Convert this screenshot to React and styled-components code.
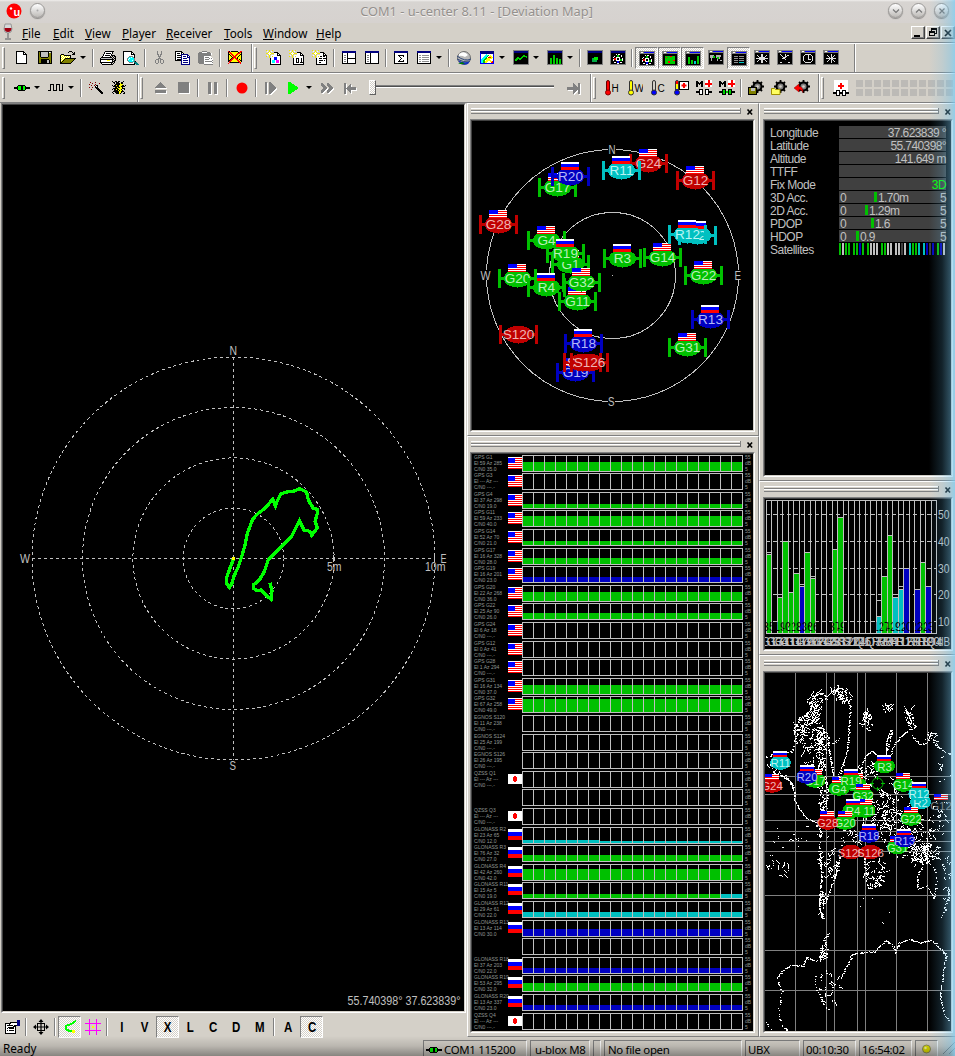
import React from "react";
import styled, { createGlobalStyle, css } from "styled-components";

const FACE = "#d4d0c8";
const GREEN = "#00c000";
const BLUE = "#0000c0";
const CYAN = "#00c0c0";
const RED = "#c00000";
const SILVER = "#c0c0c0";
const UI = '"Noto Sans", "Open Sans", sans-serif';
const ARIAL = '"Liberation Sans", Arial, sans-serif';

const Global = createGlobalStyle`
  *, *::before, *::after { box-sizing: border-box; }
  body { margin: 0; background: ${FACE}; overflow: hidden; }
  svg { display: block; flex: none; }
`;

const Window = styled.div`
  position: relative;
  width: 955px;
  height: 1056px;
  overflow: hidden;
  display: flex;
  flex-direction: column;
  background: ${FACE};
  font-family: ${UI};
  font-size: 11.7px;
  color: #000;
`;

const EdgeGlow = styled.div`
  position: absolute;
  top: 0;
  right: 0;
  width: 26px;
  height: 1056px;
  pointer-events: none;
  background: linear-gradient(to right, rgba(105, 190, 235, 0), rgba(105, 190, 235, 0.18) 50%, rgba(115, 195, 235, 0.42) 82%, rgba(130, 205, 240, 0.8));
`;

const BottomShade = styled.div`
  position: absolute;
  left: 0;
  bottom: 0;
  width: 955px;
  height: 20px;
  pointer-events: none;
  background: linear-gradient(rgba(0, 0, 0, 0), rgba(0, 0, 0, 0.12) 50%, rgba(0, 0, 0, 0.36));
`;

/* ---------- title and menu ---------- */

const TitleBar = styled.div`
  height: 23px;
  flex: none;
  display: flex;
  align-items: center;
  padding: 0 6px 2px 6px;
  gap: 8px;
  background: linear-gradient(#f0eeec 0, #d7d4d1 2px, #d6d2cf);
`;

const TitleText = styled.div`
  flex: 1;
  padding: 1px 0 0 20px;
  text-align: center;
  font-size: 12.8px;
  line-height: 20px;
  color: #94908d;
  text-shadow: 0 1px 0 #f2f0ee;
  white-space: nowrap;
`;

const Round = styled.div`
  width: 15px;
  height: 15px;
  border-radius: 50%;
  border: 1px solid #9a9896;
  background: linear-gradient(#ffffff, #bdbab7);
  box-shadow: 0 1px 1px rgba(0, 0, 0, 0.35);
  display: flex;
  align-items: center;
  justify-content: center;
`;

const TitleButtons = styled.div`
  display: flex;
  gap: 8px;
`;

const MenuBar = styled.div`
  height: 20px;
  flex: none;
  display: flex;
  align-items: center;
  padding-left: 1px;
  border-bottom: 1px solid #808080;
`;

const MenuItem = styled.div`
  width: ${(p) => p.$w}px;
  height: 18px;
  line-height: 19px;
  &::first-letter { text-decoration: underline; }
`;

const MenuIcon = styled.div`
  width: 21px;
  height: 19px;
`;

const MdiButtons = styled.div`
  margin-left: auto;
  display: flex;
  gap: 1px;
`;

const MdiButton = styled.div`
  width: 14px;
  height: 13px;
  border: 1px solid;
  border-color: #fff #404040 #404040 #fff;
  box-shadow: inset -1px -1px 0 #808080;
  display: flex;
  align-items: center;
  justify-content: center;
`;

/* ---------- toolbars ---------- */

const BarRow = styled.div`
  height: 30px;
  flex: none;
  display: flex;
  border-top: 1px solid #fff;
  border-bottom: 1px solid #808080;
`;

const Band = styled.div`
  flex: none;
  width: ${(p) => p.$w}px;
  display: flex;
  align-items: center;
  padding: 0 0 1px 2px;
  overflow: hidden;
  border-right: ${(p) => (p.$last ? "none" : "1px solid #808080")};
  box-shadow: ${(p) => (p.$first ? "none" : "inset 1px 0 0 #fff")};
`;

const Grip = styled.div`
  flex: none;
  width: 3px;
  height: 22px;
  margin-right: ${(p) => p.$gap ?? 5}px;
  border: 1px solid;
  border-color: #fff #808080 #808080 #fff;
`;

const Button = styled.div`
  flex: none;
  width: 23px;
  height: 22px;
  display: flex;
  align-items: center;
  justify-content: center;
  ${(p) =>
    p.$on &&
    css`
      border: 1px solid;
      border-color: #808080 #fff #fff #808080;
      background: repeating-conic-gradient(#fff 0 25%, ${FACE} 0 50%) 0 0 / 2px 2px;
      padding: 1px 0 0 1px;
    `}
`;

const Arrow = styled.div`
  flex: none;
  width: 11px;
  display: flex;
  justify-content: center;
  padding-right: 3px;
  &::after {
    content: "";
    border: 3px solid transparent;
    border-top-color: #000;
    border-bottom: 0;
  }
`;

const Sep = styled.div`
  flex: none;
  width: 6px;
  height: 18px;
  &::after {
    content: "";
    display: block;
    width: 2px;
    height: 100%;
    margin-left: 2px;
    border-left: 1px solid #808080;
    border-right: 1px solid #fff;
  }
`;

const Slider = styled.div`
  flex: none;
  width: 200px;
  height: 22px;
  display: flex;
  align-items: center;
  padding: 0 8px 0 7px;
`;

const Thumb = styled.div`
  width: 7px;
  height: 15px;
  background: repeating-conic-gradient(#fff 0 25%, ${FACE} 0 50%) 0 0 / 2px 2px;
  border: 1px solid;
  border-color: #fff #606060 #606060 #fff;
`;

const Track = styled.div`
  flex: 1;
  height: 3px;
  margin-bottom: 2px;
  border-top: 1px solid #808080;
  border-bottom: 1px solid #fff;
  background: #505050;
`;

const LedGrid = styled.div`
  display: grid;
  grid-template-columns: repeat(12, 7px);
  grid-auto-rows: 7px;
  gap: 2px;
  padding-left: 4px;
`;

const Led = styled.i`
  background: #bcbab6;
`;

const Letter = styled.span`
  font: bold 14px ${ARIAL};
  transform: scaleX(0.82);
`;

/* ---------- work area ---------- */

const Body = styled.div`
  flex: none;
  height: 935px;
  display: grid;
  grid-template-columns: 467px 292px 196px;
`;

const Column = styled.div`
  display: flex;
  flex-direction: column;
`;

const Well = styled.div`
  flex: 1;
  min-height: 0;
  border: 1px solid;
  border-color: #808080 #fff #fff #808080;
  overflow: hidden;
`;

const WellInner = styled.div`
  height: 100%;
  border: 1px solid;
  border-color: #404040 ${FACE} ${FACE} #404040;
  background: #000;
  overflow: hidden;
`;

const MapWell = styled.div`
  flex: none;
  height: 910px;
  display: flex;
  padding: 0 1px 0 1px;
`;

const ViewBar = styled.div`
  flex: 1;
  display: flex;
  align-items: center;
  padding-top: 2px;
`;

const DockFrame = styled.div`
  flex: none;
  height: ${(p) => p.$h}px;
  display: flex;
  flex-direction: column;
  padding: 0 ${(p) => (p.$edge ? 2 : 3)}px 3px ${(p) => (p.$edge ? 3 : 2)}px;
  border-top: 1px solid #fff;
  border-left: 1px solid #fff;
  border-bottom: 1px solid #808080;
  border-right: ${(p) => (p.$edge ? "none" : "1px solid #808080")};
`;

const DockHead = styled.div`
  height: 15px;
  flex: none;
  display: flex;
  padding: 4px 1px 0 1px;
  gap: 5px;
`;

const DockGrip = styled.div`
  flex: 1;
  height: 6px;
  border-right: 1px solid #808080;
  background: repeating-linear-gradient(#fff 0 1px, ${FACE} 1px 2px, #808080 2px 3px);
`;

const DockClose = styled.div`
  width: 8px;
  height: 8px;
`;

function Dock({ h, edge, children }) {
  return (
    <DockFrame $h={h} $edge={edge}>
      <DockHead>
        <DockGrip />
        <DockClose>
          <svg width="8" height="8" viewBox="0 0 8 8">
            <path d="M1.5 1.500l4.600 5M6.100 1.500l-4.600 5" stroke="#000" strokeWidth="1.600" />
          </svg>
        </DockClose>
      </DockHead>
      <Well>
        <WellInner>{children}</WellInner>
      </Well>
    </DockFrame>
  );
}

/* ---------- satellites ---------- */

const SATS = [
  ["GPS G1", "59", "285", 35, "us", GREEN, 36],
  ["GPS G3", "---", "---", null, "us", null],
  ["GPS G4", "37", "298", 19, "us", GREEN, 20],
  ["GPS G11", "59", "233", 40, "us", GREEN, 40],
  ["GPS G14", "52", "70", 21, "us", GREEN, 21],
  ["GPS G17", "16", "328", 28, "us", GREEN, 28],
  ["GPS G19", "16", "201", 23, "us", BLUE, 24],
  ["GPS G20", "22", "268", 36, "us", GREEN, 36],
  ["GPS G22", "25", "90", 26, "us", GREEN, 27],
  ["GPS G24", "6", "18", null, "us", null],
  ["GPS G12", "0", "41", null, "us", null],
  ["GPS G28", "1", "294", null, "us", null],
  ["GPS G31", "16", "134", 37, "us", GREEN, 37],
  ["GPS G32", "67", "258", 49, "us", GREEN, 49],
  ["EGNOS S120", "11", "238", null, null, null],
  ["EGNOS S124", "25", "199", null, null, null],
  ["EGNOS S126", "26", "195", null, null, null],
  ["QZSS Q1", "---", "---", null, "jp", null],
  null,
  ["QZSS Q3", "---", "---", null, "jp", null],
  ["GLONASS R2", "23", "65", 12, "ru", CYAN, 18],
  ["GLONASS R3", "76", "32", 27, "ru", GREEN, 27],
  ["GLONASS R4", "42", "260", 42, "ru", GREEN, 42],
  ["GLONASS R11", "15", "5", 19, "ru", GREEN, 20],
  ["GLONASS R12", "29", "61", 22, "ru", CYAN, 23],
  ["GLONASS R13", "13", "114", 30, "ru", BLUE, 30],
  null,
  ["GLONASS R18", "37", "203", 22, "ru", BLUE, 22],
  ["GLONASS R19", "53", "295", 32, "ru", GREEN, 32],
  ["GLONASS R20", "13", "337", 23, "ru", BLUE, 23],
  ["QZSS Q4", "---", "---", null, "jp", null],
].map((s) =>
  s ? { name: s[0], el: s[1], az: s[2], cn: s[3], flag: s[4], color: s[5], peak: s[6] } : null
);

function FlagShape({ kind, x, y, w, h }) {
  if (kind === "us") {
    const rows = [];
    for (let i = 1; i < h; i += 2) rows.push(<rect key={i} x={x} y={y + i} width={w} height="1" fill="#f00" />);
    return (
      <g shapeRendering="crispEdges">
        <rect x={x} y={y} width={w} height={h} fill="#fff" />
        {rows}
        <rect x={x} y={h > 10 ? y + 1 : y} width={w / 2} height={Math.round(h * 0.45)} fill="#00f" />
      </g>
    );
  }
  if (kind === "ru") {
    const white = h > 10 ? 3 : 2;
    const blue = h > 10 ? 4 : h > 6 ? 3 : 2;
    const red = h > 10 ? 4 : h > 6 ? 3 : 2;
    return (
      <g shapeRendering="crispEdges">
        <rect x={x} y={y} width={w} height={white} fill="#fff" />
        <rect x={x} y={y + white} width={w} height={blue} fill="#00f" />
        <rect x={x} y={y + white + blue} width={w} height={red} fill="#f00" />
      </g>
    );
  }
  return (
    <g shapeRendering="crispEdges">
      <rect x={x} y={y + 1} width={w} height={h - 2} fill="#fff" />
      <path d={`M${x + 5} ${y + 4}h1v-1h2v1h1v4h-1v1h-2v-1h-1z`} fill="#f00" />
    </g>
  );
}

/* ---------- signal history ---------- */

const SignalList = styled.div`
  padding: 1px 0 0 2px;
`;

const SignalRow = styled.div`
  height: ${(p) => p.$h}px;
  display: flex;
`;

const TinyText = styled.div`
  width: ${(p) => p.$w}px;
  flex: none;
  height: 18px;
  margin-top: -1px;
  font: 5px/6px ${ARIAL};
  color: #929894;
  white-space: nowrap;
`;

const FlagSlot = styled.div`
  flex: none;
  width: 14px;
  padding-top: 2px;
`;

const History = styled.div`
  flex: none;
  height: 17px;
  width: 221px;
  margin-right: 2px;
  display: flex;
  border: 1px solid ${SILVER};
  border-right: 0;
`;

const HistoryCell = styled.div`
  width: 11px;
  border-right: 1px solid ${SILVER};
  background: linear-gradient(${(p) => p.$c}, ${(p) => p.$c}) bottom / 100% ${(p) => p.$level}px no-repeat;
`;

function signalCell(sat, n) {
  if (!sat || sat.cn === null) return { c: "#000", level: 0 };
  let level = Math.floor(((sat.cn - 5) / 50) * 15);
  let c = sat.color;
  if (sat.name === "GLONASS R2" && n < 7) level = 3;
  if (sat.name === "GLONASS R11" && n > 17) c = CYAN;
  return { c, level };
}

function Signals() {
  return (
    <SignalList>
      {SATS.map((sat, i) => (
        <SignalRow key={i} $h={Math.floor(((i + 1) * 93) / 5) - Math.floor((i * 93) / 5)}>
          <TinyText $w={34}>
            {sat && (
              <>
                {sat.name}
                <br />
                El {sat.el} Az {sat.az}
                <br />
                C/N0 {sat.cn === null ? "---.-" : sat.cn.toFixed(1)}
              </>
            )}
          </TinyText>
          <FlagSlot>
            {sat && sat.flag && (
              <svg width="14" height="12">
                <FlagShape kind={sat.flag} x={0} y={0} w={14} h={12} />
              </svg>
            )}
          </FlagSlot>
          <History>
            {Array.from({ length: 20 }, (_, n) => {
              const s = signalCell(sat, n);
              return <HistoryCell key={n} $c={s.c} $level={s.level} />;
            })}
          </History>
          <TinyText $w={9}>
            55
            <br />
            dB
            <br />5
          </TinyText>
        </SignalRow>
      ))}
    </SignalList>
  );
}

/* ---------- sky view ---------- */

const TINT = { [GREEN]: "#b8f0b8", [BLUE]: "#b4b8f8", [CYAN]: "#b8f4f4", [RED]: "#f0b4b4" };

const SKY = [
  ["G17", 557.5, 187.5, GREEN], ["R20", 570.5, 176.5, BLUE], ["G24", 648.5, 163.5, RED],
  ["R11", 621.5, 170.5, CYAN], ["G12", 695.5, 180.5, RED], ["G28", 498.5, 224.5, RED],
  ["G4", 546.5, 240.5, GREEN], ["G1", 570.5, 264.5, GREEN], ["R19", 565.5, 253.5, GREEN],
  ["R3", 622.5, 258.5, GREEN], ["G14", 662.5, 257.5, GREEN], ["R2", 697.5, 235.5, CYAN],
  ["R12", 687.5, 234.5, CYAN], ["G22", 703.5, 275.5, GREEN], ["G20", 517.5, 278.5, GREEN],
  ["R4", 546.5, 287.5, GREEN], ["G11", 577.5, 301.5, GREEN], ["G32", 581.5, 282.5, GREEN],
  ["S120", 518.5, 334.5, RED], ["R18", 583.5, 343.5, BLUE], ["G19", 575.5, 372.5, BLUE],
  ["S124", 582.5, 362.5, RED], ["S126", 589.5, 362.5, RED], ["R13", 710.5, 319.5, BLUE],
  ["G31", 687.5, 347.5, GREEN],
];

const flagOf = (id) => (id[0] === "G" ? "us" : id[0] === "R" ? "ru" : null);

function SkyView() {
  return (
    <svg width="281" height="309" viewBox="472 121 281 309" fontFamily={ARIAL}>
      <g fill="none" stroke={SILVER} shapeRendering="crispEdges">
        <circle cx="612.5" cy="275.5" r="126" />
        <circle cx="612.5" cy="275.5" r="63" />
        <path d="M612 275.5h1" />
      </g>
      <g fill={SILVER} fontSize="12.500">
        <path d="M608 144h8v10h-8zM480 270h11v10h-11zM734 270h8v10h-8zM608 397h7v10h-7z" fill="#000" />
        <text x="608.5" y="154" textLength="7" lengthAdjust="spacingAndGlyphs">N</text>
        <text x="480.5" y="280" textLength="10" lengthAdjust="spacingAndGlyphs">W</text>
        <text x="734.5" y="280" textLength="6.5" lengthAdjust="spacingAndGlyphs">E</text>
        <text x="608" y="406" textLength="6.5" lengthAdjust="spacingAndGlyphs">S</text>
      </g>
      {SKY.map(([id, x, y, c]) => (
        <g key={id}>
          <path
            d={`M${x - 19.5} ${y - 9.5}h3v8h33v-8h3v19h-3v-8h-33v8h-3z`}
            fill={c}
            shapeRendering="crispEdges"
          />
          <ellipse cx={x} cy={y} rx="13.5" ry="9" fill={c} shapeRendering="crispEdges" />
          {flagOf(id) && <FlagShape kind={flagOf(id)} x={x - 9.5} y={y - 14.5} w={18} h={8} />}
          <text x={x} y={y + 4.5} textAnchor="middle" fontSize="13.600" fill={TINT[c]}>
            {id}
          </text>
        </g>
      ))}
    </svg>
  );
}

/* ---------- deviation map ---------- */

const TRAIL =
  "190,268 178,300 170,322 170,340 178,352 185,342 192,318 205,290 215,260 225,225 232,190 248,148 262,132 285,115 308,88 316,108 322,92 332,72 350,66 370,64 388,56 410,66 415,90 430,115 442,118 442,130 435,155 442,172 434,184 425,196 420,184 402,180 388,152 378,172 365,198 330,235 295,268 283,305 268,330 250,345 250,355 262,362 272,360 288,376 303,388 306,362 300,338";

function DeviationMap() {
  return (
    <svg width="461" height="906" viewBox="3 105 461 906" fontFamily={ARIAL}>
      <g fill="none" stroke={SILVER} strokeDasharray="3 3" shapeRendering="crispEdges">
        <circle cx="233.5" cy="558.5" r="50.3" />
        <circle cx="233.5" cy="558.5" r="100.6" />
        <circle cx="233.5" cy="558.5" r="151" />
        <circle cx="233.5" cy="558.5" r="201.5" />
        <path d="M32 558.5H434M233.5 357V760" />
        <path d="M333.5 555v7M434.5 555v7" strokeDasharray="none" />
      </g>
      <g fill={SILVER} fontSize="12">
        <text x="229.5" y="355" textLength="7.5" lengthAdjust="spacingAndGlyphs">N</text>
        <text x="229.5" y="769.5" textLength="6.5" lengthAdjust="spacingAndGlyphs">S</text>
        <text x="20" y="563" textLength="10" lengthAdjust="spacingAndGlyphs">W</text>
        <text x="440.5" y="562.5" textLength="6" lengthAdjust="spacingAndGlyphs">E</text>
        <text x="327" y="571" textLength="14.5" lengthAdjust="spacingAndGlyphs">5m</text>
        <text x="425" y="571" textLength="20.5" lengthAdjust="spacingAndGlyphs">10m</text>
        <text x="347.5" y="1005" textLength="113" lengthAdjust="spacingAndGlyphs">55.740398° 37.623839°</text>
      </g>
      <g transform="translate(170 470) scale(.33333)">
        <polyline points={TRAIL} fill="none" stroke="#0f0" strokeWidth="10" shapeRendering="crispEdges" />
        <rect x="186" y="261" width="9" height="9" fill="#ff0" />
      </g>
    </svg>
  );
}

/* ---------- data panel ---------- */

const DataList = styled.div`
  padding: 5px 5px 0 5px;
  font: 12px/15px ${ARIAL};
  letter-spacing: -0.6px;
  color: ${SILVER};
`;

const DataRow = styled.div`
  height: 13px;
  display: flex;
`;

const DataLabel = styled.div`
  flex: none;
  width: 69px;
  white-space: nowrap;
  letter-spacing: -0.5px;
`;

const DataValue = styled.div`
  flex: none;
  width: 107px;
  height: 12px;
  padding-left: 1px;
  display: flex;
  justify-content: ${(p) => (p.$right ? "flex-end" : "flex-start")};
  background: #404040;
  color: ${(p) => p.$c ?? "inherit"};
  line-height: 14px;
  white-space: nowrap;
`;

const Zero = styled.span`
  width: ${(p) => p.$w}px;
`;

const Marker = styled.i`
  width: 3px;
  height: 10px;
  margin: 1px 1px 0 0;
  background: ${GREEN};
`;

const Max = styled.span`
  margin-left: auto;
`;

const SatBars = styled.div`
  display: grid;
  grid-template-columns: repeat(8, 12px);
  column-gap: 2px;
  height: 12px;
`;

const SatGroup = styled.div`
  display: flex;
  gap: 1px;
`;

const SatTick = styled.i`
  width: 2px;
  height: 12px;
  background: ${(p) => p.$c};
`;

function DataView() {
  const values = [
    ["Longitude", "37.623839 °"],
    ["Latitude", "55.740398°"],
    ["Altitude", "141.649 m"],
    ["TTFF", ""],
    ["Fix Mode", "3D", "#0f0"],
  ];
  const gauges = [
    ["3D Acc.", "1.70m", 34],
    ["2D Acc.", "1.29m", 25],
    ["PDOP", "1.6", 31],
    ["HDOP", "0.9", 16],
  ];
  const tick = (s, i) => {
    if (!s) return "#404040";
    if (i === 23) return CYAN;
    return s.color ?? SILVER;
  };
  return (
    <DataList>
      {values.map(([k, v, c]) => (
        <DataRow key={k}>
          <DataLabel>{k}</DataLabel>
          <DataValue $right $c={c}>{v}</DataValue>
        </DataRow>
      ))}
      {gauges.map(([k, v, w]) => (
        <DataRow key={k}>
          <DataLabel>{k}</DataLabel>
          <DataValue>
            <Zero $w={w}>0</Zero>
            <Marker />
            {v}
            <Max>5</Max>
          </DataValue>
        </DataRow>
      ))}
      <DataRow>
        <DataLabel>Satellites</DataLabel>
        <SatBars>
          {Array.from({ length: 8 }, (_, g) => (
            <SatGroup key={g}>
              {SATS.slice(g * 4, g * 4 + 4).map((s, i) => (
                <SatTick key={i} $c={tick(s, g * 4 + i)} />
              ))}
            </SatGroup>
          ))}
        </SatBars>
      </DataRow>
    </DataList>
  );
}

/* ---------- signal chart ---------- */

function SignalChart() {
  const yOf = (v) => Math.round(514 + (50 - v) * 2.68);
  const step = 171 / 31;
  return (
    <svg width="186" height="150" viewBox="765 499 186 150" fontFamily={ARIAL}>
      <defs>
        {SATS.map((s, i) => (
          <clipPath id={`bar${i}`} key={i}>
            <rect x={766 + i * step} y="500" width={step} height="134" />
          </clipPath>
        ))}
      </defs>
      <g shapeRendering="crispEdges" stroke={SILVER} fill="none">
        <rect x="766.5" y="500.5" width="170" height="133" />
        {SATS.map((s, i) => (
          <path key={i} d={`M${Math.floor(766 + i * step) + 0.5} 500V633`} />
        ))}
        {[50, 40, 30, 20, 10].map((v) => (
          <path key={v} d={`M766 ${yOf(v) + 0.5}H937`} strokeDasharray="4 3" />
        ))}
      </g>
      {SATS.map((s, i) => {
        if (!s || s.cn === null) return null;
        const x = Math.floor(766 + i * step);
        const w = Math.floor(766 + (i + 1) * step) - x;
        return (
          <g key={i} shapeRendering="crispEdges">
            <rect x={x + 1} y={yOf(s.cn)} width={w - 1} height={633 - yOf(s.cn)} fill={i === 23 ? CYAN : s.color} />
            <rect x={x} y={yOf(s.cn)} width={w} height="1" fill={SILVER} />
            <rect x={x} y={yOf(s.peak)} width={w} height="1" fill={SILVER} />
            <text x={x + 3} y="631" fontSize="12" textAnchor="middle" fill="#000" clipPath={`url(#bar${i})`}>
              {s.cn}
            </text>
          </g>
        );
      })}
      <g fill={SILVER} fontSize="12.500">
        {[50, 40, 30, 20, 10].map((v) => (
          <text key={v} x="938" y={yOf(v) + 5} textLength="11.5" lengthAdjust="spacingAndGlyphs">
            {v}
          </text>
        ))}
        <text x="938" y="646" fontSize="12" textLength="12" lengthAdjust="spacingAndGlyphs">dB</text>
        {SATS.map((s, i) =>
          s ? (
            <text key={i} x={769 + i * step} y="646" fontSize="12" textAnchor="middle">
              {s.name.split(" ")[1]}
            </text>
          ) : null
        )}
      </g>
    </svg>
  );
}

/* ---------- world map ---------- */

function rng(seed) {
  let s = seed;
  return () => {
    s = (s * 1664525 + 1013904223) % 4294967296;
    return s / 4294967296;
  };
}

/* [gap chance, wobble, x1, y1, x2, y2 ...] in thirds of a pixel */
const COASTS = [
  [0.15, 2, 150, 170, 155, 130, 175, 112, 190, 118, 200, 135],
  [0.1, 2, 195, 130, 215, 110, 235, 98, 252, 104, 262, 135, 270, 160, 266, 200, 264, 250, 258, 295, 245, 335, 228, 378],
  [0.05, 2, 182, 215, 200, 235, 205, 265, 210, 310, 217, 345, 220, 372],
  [0.05, 2, 217, 265, 240, 250],
  [0.05, 2, 300, 372, 306, 325, 318, 300, 335, 288, 350, 300],
  [0.15, 2, 378, 300, 378, 260, 388, 230, 396, 222, 388, 260, 378, 290],
  [0.15, 2, 392, 300, 402, 268, 425, 240, 450, 222, 465, 215, 445, 185, 432, 150],
  [0.2, 3, 455, 240, 475, 268, 500, 262, 512, 232, 525, 235, 518, 262, 545, 285, 575, 300],
  [0.15, 3, 15, 308, 40, 295, 70, 290, 95, 290, 105, 265, 100, 220, 125, 185],
  [0, 2, 58, 360, 75, 362, 90, 380, 102, 410, 104, 440, 120, 465, 140, 490],
  [0, 2, 60, 360, 90, 378, 100, 405],
  [0.2, 3, 140, 490, 165, 500, 180, 530, 178, 560, 178, 600],
  [0.15, 3, 195, 380, 205, 420, 190, 450, 178, 480, 185, 500, 170, 510],
  [0.1, 2, 178, 600, 184, 650, 180, 700, 178, 750, 184, 785, 192, 792],
  [0.1, 2, 180, 720, 178, 760, 190, 790],
  [0.2, 2, 236, 605, 232, 640, 218, 680, 202, 720, 194, 745],
  [0.1, 2, 207, 835, 190, 850, 198, 870, 188, 900, 178, 918, 150, 912, 138, 905, 130, 932, 90, 930, 62, 950, 50, 972],
  [0.1, 2, 186, 870, 180, 915],
  [0.5, 2, 50, 972, 65, 1012, 55, 1060, 60, 1105, 80, 1127],
  [0.3, 3, 165, 965, 168, 1000, 185, 1040, 205, 1065],
  [0.3, 2, 243, 968, 258, 935, 275, 898],
  [0.1, 2, 275, 898, 310, 892, 345, 888, 375, 855, 400, 872, 405, 895, 415, 865, 445, 852, 480, 862, 515, 855, 540, 880, 556, 900],
  [0.4, 2, 556, 900, 548, 960, 540, 1020, 548, 1065, 565, 1100],
  [0.5, 2, 15, 1100, 38, 1125],
  [0.2, 3, 455, 600, 485, 618, 510, 600, 540, 612],
  [0.3, 2, 485, 635, 470, 665, 474, 700, 500, 692, 522, 730, 530, 670, 518, 630],
  [0.3, 3, 310, 610, 318, 660, 325, 700, 345, 690, 360, 650, 390, 645],
  [0.3, 3, 340, 385, 365, 405, 395, 430, 400, 470, 440, 480],
  [0.3, 3, 565, 700, 560, 740, 545, 790],
];

/* [walks, longest walk, x, y, rx, ry] broken shoreline, in thirds of a pixel */
const ISLES = [
  [100, 7, 148, 230, 42, 62], [34, 6, 165, 145, 22, 32], [32, 6, 185, 290, 14, 50], [30, 6, 245, 118, 30, 24],
  [26, 6, 322, 190, 14, 30], [20, 4, 380, 158, 18, 10], [18, 5, 445, 185, 12, 38], [20, 5, 165, 330, 28, 26],
  [34, 5, 190, 430, 16, 66], [66, 5, 350, 460, 50, 60], [36, 5, 325, 360, 34, 44], [72, 5, 400, 520, 50, 60],
  [44, 5, 480, 540, 40, 60], [20, 5, 540, 480, 24, 60], [60, 5, 495, 590, 44, 28], [10, 4, 515, 255, 24, 24],
  [40, 5, 345, 650, 30, 48], [32, 5, 205, 620, 28, 50], [8, 3, 170, 530, 40, 46], [24, 4, 205, 1000, 32, 56],
  [12, 4, 68, 640, 20, 22], [8, 3, 30, 640, 18, 50], [18, 4, 480, 612, 34, 18], [14, 4, 560, 640, 12, 50],
  [10, 4, 562, 720, 8, 30], [22, 4, 420, 580, 40, 30], [12, 2, 90, 540, 70, 40], [30, 4, 270, 560, 34, 40],
  [8, 4, 550, 350, 24, 60], [6, 1, 320, 760, 110, 50], [16, 5, 184, 740, 8, 40], [16, 4, 40, 345, 22, 20],
  [26, 5, 440, 400, 50, 50], [14, 4, 190, 890, 12, 30],
];

function worldPixels() {
  const rand = rng(7);
  const out = [];
  const dot = (x, y, w = 1, h = 1) => out.push(`M${Math.round(x)} ${Math.round(y)}h${w}v${h}h-${w}z`);
  COASTS.forEach(([gap, wob, ...p]) => {
    for (let i = 0; i + 3 < p.length; i += 2) {
      const dx = p[i + 2] - p[i];
      const dy = p[i + 3] - p[i + 1];
      const n = Math.max(1, Math.round(Math.hypot(dx, dy) / 3));
      for (let k = 0; k < n; k++) {
        if (rand() < gap) continue;
        const x = p[i] + (dx * k) / n + (rand() - 0.5) * wob * 1.6;
        const y = p[i + 1] + (dy * k) / n + (rand() - 0.5) * wob * 1.6;
        dot(x / 3 + 760, y / 3 + 655, rand() < 0.35 ? 2 : 1);
      }
    }
  });
  ISLES.forEach(([n, longest, cx, cy, rx, ry]) => {
    for (let k = 0; k < n; k++) {
      const a = rand() * Math.PI * 2;
      const r = Math.sqrt(rand());
      let x = (cx + Math.cos(a) * r * rx) / 3 + 760;
      let y = (cy + Math.sin(a) * r * ry) / 3 + 655;
      let dir = rand() * Math.PI * 2;
      const len = 1 + Math.floor(rand() * longest);
      for (let j = 0; j < len; j++) {
        dot(x, y);
        dir += (rand() - 0.5) * 1.8;
        x += Math.cos(dir) * 1.2;
        y += Math.sin(dir) * 1.2;
      }
    }
  });
  return out.join("");
}

const WORLD = worldPixels();

const WORLD_SATS = [
  ["G24", 772, 785.5, RED], ["R11", 780.5, 762.5, CYAN], ["G17", 815, 780.5, GREEN], ["R20", 807, 776.5, BLUE],
  ["R3", 884.5, 766, GREEN], ["G4", 839, 788.5, GREEN], ["G1", 856, 784.5, GREEN], ["R19", 851, 780.5, GREEN],
  ["G32", 863, 795, GREEN], ["G14", 903.5, 784.5, GREEN], ["R2", 920.5, 802, CYAN], ["R12", 919, 793.5, CYAN],
  ["G12", 941, 805.5, null], ["G11", 865, 810.5, GREEN], ["R4", 853, 810.5, GREEN], ["G22", 911, 818.5, GREEN],
  ["G20", 845, 822.5, GREEN], ["G28", 827.5, 822.5, RED], ["R18", 869, 835.5, BLUE], ["G31", 897.5, 847, GREEN],
  ["R13", 904.5, 840, BLUE], ["S120", 851, 852, RED], ["S126", 870.5, 852, RED],
];

function WorldMap() {
  return (
    <svg width="186" height="358" viewBox="765 673 186 358" fontFamily={ARIAL}>
      <path
        d="M795.5 672V1031M826.5 672V1031M834.5 672V1031M857.5 672V1031M865.5 672V1031M896.5 672V1031M927.5 672V1031M765 776.5H951M765 794.5H951M765 820.5H951M765 831.5H951M765 841.5H951M765 851.5H951M765 895.5H951M765 950.5H951M765 990.5H951"
        stroke="#808080"
        shapeRendering="crispEdges"
      />
      <path d={WORLD} fill="#fff" shapeRendering="crispEdges" />
      <circle cx="877.5" cy="783.5" r="6" fill="#000" />
      <g fill="none" stroke="#00c000">
        <circle cx="877.5" cy="783.5" r="5.5" />
        <path d="M877.5 776v4M877.5 787v4M870 783.5h4M881 783.5h4" />
      </g>
      {WORLD_SATS.map(([id, x, y, c]) => (
        <g key={id}>
          {c && <ellipse cx={x} cy={y} rx="10.5" ry="7.300" fill={c} shapeRendering="crispEdges" />}
          {flagOf(id) && <FlagShape kind={flagOf(id)} x={Math.round(x - 7.5)} y={Math.round(y - 11.5)} w={14} h={6} />}
          <text x={x} y={y + 4.5} textAnchor="middle" fontSize="11.500" fill={c ? TINT[c] : "#808080"}>
            {id}
          </text>
        </g>
      ))}
    </svg>
  );
}

/* ---------- icons ---------- */

const PAL = {
  k: "#000", w: "#fff", g: "#808080", s: "#c0c0c0", y: "#808000", Y: "#ff0", r: "#f00", b: "#000080",
  B: "#00f", G: "#0f0", n: "#00c000", c: "#008080", C: "#0ff", m: "#f0f", d: "#800000",
};

function Pix({ rows }) {
  const w = Math.max(...rows.map((r) => r.length));
  const cells = [];
  rows.forEach((row, y) => {
    for (let x = 0; x < row.length; ) {
      const ch = row[x];
      let n = 1;
      while (row[x + n] === ch) n++;
      if (PAL[ch]) cells.push(<rect key={`${x}-${y}`} x={x} y={y} width={n} height="1" fill={PAL[ch]} />);
      x += n;
    }
  });
  return (
    <svg width={w} height={rows.length} shapeRendering="crispEdges">
      {cells}
    </svg>
  );
}

const ART = {
  doc: ["kkkkkkkk...", "kwwwwwwkk..", "kwwwwwwkwk.", "kwwwwwwkkkk", "kwwwwwwwwwk", "kwwwwwwwwwk", "kwwwwwwwwwk", "kwwwwwwwwwk", "kwwwwwwwwwk", "kwwwwwwwwwk", "kwwwwwwwwwk", "kwwwwwwwwwk", "kkkkkkkkkkk"],
  save: ["kkkkkkkkkkkkkk", "kykssssssskwsk", "kykssssssskyyk", "kykssssssskyyk", "kykssssssskyyk", "kykssssssskyyk", "kyykkkkkkkyyyk", "kyyyyyyyyyyyyk", "kyykkkkkkkkyyk", "kyykkkkkksskyk", "kyykkkkkksskyk", "kyykkkkkksskyk", "kkkkkkkkkkkkkk", ".............."],
  open: [".........kkk....", "........k...k.k.", ".............kk.", ".kkk........kkk.", "kYwYkkkkkkk.....", "kwYwYwYwYwk.....", "kYwYwYwYwYk.....", "kwYwYkkkkkkkkkkk", "kYwYkyyyyyyyyyk.", "kwYkyyyyyyyyyk..", "kYkyyyyyyyyyk...", "kkyyyyyyyyyk....", "kkkkkkkkkkk....."],
  print: [".....kkkkkkkkk..", "....kwwwwwwwk...", "....kwkkkkkwk...", "...kwwwwwwwk....", "...kwkkkkkwkkkk.", "..kwwwwwwwk.k.kk", ".kkkkkkkkkkk.k.k", "ksssssssssssk.kk", "kkkkkkkkkkkkkk.k", "kwwwwwwYYYwwk.kk", "kwwwwwwwwwwwkkk.", "kkkkkkkkkkkkk.k.", ".kwwwwwwwwwk.k..", "..kkkkkkkkkkk..."],
  preview: ["kkkkkkkkk.......", "kwwwwwwwkk......", "kwwwwwwwkwk.....", "kwwwwwwwkkkk....", "kwwwwwwwwwwk....", "kwwwwwggggwk....", "kwwwwgCCwCgk....", "kwwwgCwCCCCg....", "kwwwgwCCCCCg....", "kwwwgCCCCwCg....", "kwwwwgCCCCgck...", "kwwwwwggggwccc..", "kwwwwwwwwwwkccc.", "kkkkkkkkkkkk.ccc"],
  cut: ["..g...g..", "..g...g..", "..g...g..", "..gg.gg..", "...g.g...", "...ggg...", "....g....", "...ggg...", ".ggg.ggg.", "g..g.g..g", "g..g.g..g", "g..g.g..g", ".gg...gg."],
  copy: ["kkkkkkk........", "kwwwwwkk.......", "kwkkkwkwk......", "kwwwwwbbbbbbb..", "kwkkkkbwwwwwbb.", "kwwwwwbwbbbwbwb", "kwkkkkbwwwwwbbb", "kwwwwwbwbbbbwwb", "kwkkkkbwwwwwwwb", "kkkkkkbwbbbbbwb", "......bwwwwwwwb", "......bwbbbbbwb", "......bwwwwwwwb", "......bbbbbbbbb"],
  paste: ["....ggggg......", ".gggwwwwwggg...", "gggggggggggggw.", "gggggggggggggw.", "ggggggggggggg..", "ggggggwwwwwww..", "ggggggwggggwww.", "ggggggwwwwwgwgw", "ggggggwggggwwww", "ggggggwwwwwwwwg", "ggggggwgggggggw", "ggggggwwwwwwwwg", ".gggggwwwwwwwww", "......ggggggggg"],
  del: ["rk.kkkkkkk..rr", "krrYYYYYYYkrrk", "kYrrYYYYYrrrYk", "kkYrrYYYrrYYkk", "kYkYrrYrrYYkYk", "kYYkYrrrYYkYYk", "kYYYkrrrYkYYYk", "kYYkrrYrrkYYYk", "kYkrrYYYrrYkYk", "kkrrYYYYYrrYkk", "krrYYYYYYYrrYk", ".rkkkkkkkkkrr.", "r...........r."],
  conn: ["....kkkkkkk.....", "...kGGGkkGGk....", "kkkkGGGkkGGkkkkk", "kkkkGGGkkGGkkkkk", "...kGGGkkGGk....", "....kkkkkkk....."],
  wave: ["..kkkk..kkkk..k", "..k..k..k..k..k", "..k..k..k..k..k", "..k..k..k..k..k", "..k..k..k..k..k", "..k..k..k..k..k", "kkk..kkkk..kkkk"],
  wand: [".d....d.......", "...d......d...", "d.....d.......", "..d..d.kk.....", "......kwk.....", "d..d..kkk.....", ".......kkk....", "..d.....kkk...", ".........kkk..", "..........kkk.", "...........kkk", "............kk"],
  bug: ["k..kk.kk...k..", ".kk.kkk..kk...", "..k.kkkkYkk...", "...kkkkkYYY...", "k.kkYkkYYYkk.k", ".kkkkkkYYkkkk.", "...kkYkkYYk...", ".kkkkkYYYYkkk.", "k.kkYkkYYk..k.", "..kkkkYkYYk...", ".kkkkkkYYkkk..", "k..kkkkYYk..k.", ".k..kkkYk..kk."],
  sun: ["Y..Y..Y.", ".w.Y.w..", "..YwY...", "YYwwwYYY", "..YwY...", ".w.Y.w..", "Y..Y..Y.", "...Y...."],
};

const SunDoc = ({ kind }) => (
  <svg width="16" height="16" viewBox="0 0 16 16" shapeRendering="crispEdges">
    <path d="M4.500 2.500h7l3 3v9h-10z" fill="#fff" stroke="#000" />
    <path d="M11.500 2.500v3h3" fill="none" stroke="#000" />
    <path d="M0 0h8v8H0z" fill={FACE} />
    <path d="M5 5h3v3H5z" fill="#fff" />
    {ART.sun.map((row, y) =>
      [...row].map((ch, x) =>
        PAL[ch] ? <rect key={`${x}-${y}`} x={x} y={y} width="1" height="1" fill={ch === "Y" ? "#f0e800" : "#fff"} /> : null
      )
    )}
    {kind === 0 && <path d="M8 7h3v3h-3z" fill="#00f" />}
    {kind === 0 && <path d="M6 10h3v3h-3z" fill="#0ff" />}
    {kind === 0 && <path d="M10 10h3v3h-3z" fill="#f0f" />}
    {kind === 1 && <path d="M7.500 8.500h2v4h-2zM12.500 8v5M11 12.500h3" fill="none" stroke="#000" />}
    {kind === 2 && <path d="M8 6.500h2m1 0h2M7 8.500h3m1 0h3M7 10.500h4m1 0h1M7 12.500h2" stroke="#000" />}
  </svg>
);

const Pane = ({ kind }) => (
  <svg width="14" height="13" shapeRendering="crispEdges">
    <rect x=".5" y=".5" width="13" height="12" fill="#fff" stroke="#000" />
    <rect width="14" height="2" fill="#000080" />
    {kind < 2 && <path d="M5.500 2v10" stroke="#000" />}
    {kind === 0 && <path d="M6 7.500h8" stroke="#000" />}
    {kind < 2 && <path d="M2 4.500h2M2 6.500h2M2 8.500h2M2 10.500h2" stroke="#808080" />}
    {kind === 2 && <path d="M4 4h6v2h-1v-1h-3v1h1v1h1v1h-1v1h-1v1h3v-1h1v2h-6v-1h1v-1h1v-1h1v-1h-1v-1h-1v-1h-1z" fill="#000" />}
    {kind === 3 && <path d="M2 4.500h2m1 0h7M2 6.500h2m1 0h7M2 8.500h2m1 0h7M2 10.500h2m1 0h7" stroke="#909090" />}
  </svg>
);

const Scope = ({ blue = "#000080", children }) => (
  <svg width="16" height="15" viewBox="0 0 16 15" shapeRendering="crispEdges">
    <rect x=".5" y=".5" width="15" height="14" fill="#000" stroke="#808080" />
    <rect x="1" y="1" width="14" height="2" fill={blue === "#00f" ? "#808080" : blue} />
    {blue === "#00f" && <rect x="5" y="1" width="10" height="1" fill="#00f" />}
    {blue === "#00f" && <rect x="2" y="1" width="2" height="1" fill="#fff" />}
    {children}
  </svg>
);

const Rays = () => (
  <path
    d="M7 4h2v3h2v-1h1v-1h1v1h-1v1h-1v1h3v1h-3v1h1v1h1v1h-1v-1h-1v-1h-2v3h-2v-3h-2v1h-1v1h-1v-1h1v-1h1v-1h-3v-1h3v-1h-1v-1h-1v-1h1v1h1v1h2z"
    fill="#e0e0e0"
  />
);

const SkyMini = () => (
  <>
    <circle cx="8" cy="9" r="4.500" fill="none" stroke="#fff" strokeDasharray="2 1" />
    <circle cx="8" cy="9" r="2" fill="none" stroke="#fff" />
    <path d="M7 5h2v2h-2zM10 9h2v2h-2z" fill="#0c0" />
    <path d="M4 8h2v2h-2z" fill="#f00" />
    <path d="M7 11h2v2h-2z" fill="#00f" />
  </>
);

const Thermo = ({ c, t }) => (
  <svg width="16" height="16" viewBox="0 0 16 16">
    <rect x="2.500" y=".5" width="3" height="11" rx="1.500" fill={t === "C" ? FACE : c} stroke={c === "#f00" ? "#600" : "#333"} />
    <circle cx="4" cy="12.500" r="2.500" fill={c} stroke={c === "#f00" ? "#800" : "#333"} />
    {t ? (
      <text x="7.500" y="12" fontFamily={ARIAL} fontSize="10">{t}</text>
    ) : (
      <>
        <path d="M3 3h2v6h-2z" fill="#ff0" />
        <path d="M3 1h2v3h-2z" fill="#f00" />
        <rect x="6.500" y="1.500" width="9" height="8" fill="#fff" stroke="#000" />
        <path d="M10 3h2v5h-2zM8.500 4.500h5v2h-5z" fill="#f00" />
      </>
    )}
  </svg>
);

const Module = ({ c }) => (
  <svg width="16" height="16" viewBox="0 0 16 16" shapeRendering="crispEdges">
    <path d="M0 7V1h2v1h1v1h1v-1h1v-1h2v6h-2V4h-1v1h-1v-1h-1v3z" />
    <rect x="9" y="0" width="7" height="7" fill="#fff" />
    <path d="M11.500 0h2v7h-2zM9 2.500h7v2h-7z" fill="#f00" />
    <path d="M0 11.500h16" stroke="#000" strokeWidth="2" />
    <path d="M3.500 9.500h3v5h-3zM9.500 9.500h3v5h-3z" fill={c} stroke="#000" />
    <path d="M7 11h2v2h-2z" fill={c === "#fff" ? FACE : c} />
  </svg>
);

const Gear = ({ kind }) => (
  <svg width="16" height="16" viewBox="0 0 16 16">
    <circle cx="9.500" cy="6.500" r="4" fill="#808080" stroke="#000" strokeWidth="2" />
    <path d="M9.500 0v3M9.500 10v3M3 6.500h3M13 6.500h3M5 2l2 2M14 11l-2-2M14 2l-2 2M5 11l2-2" stroke="#000" strokeWidth="1.800" />
    <circle cx="9.500" cy="6.500" r="1.300" fill={FACE} />
    {kind === 0 && (
      <>
        <rect x=".5" y="7.500" width="8" height="7" fill="#808000" stroke="#000" />
        <rect x="3" y="8" width="4" height="3" fill={SILVER} />
      </>
    )}
    {kind === 1 && <path d="M.5 14.500v-6h3l1 1h4.500v5z" fill="#ffff60" stroke="#a09000" />}
    {kind === 2 && <path d="M0 8l5-4v2.500q4 0 4 6q-1-3-4-3v2.500z" fill="#f00" stroke="#900" strokeWidth=".5" />}
  </svg>
);

const Media = ({ d, c = "#808080", light = true }) => (
  <svg width="15" height="14" viewBox="0 0 15 14" shapeRendering="crispEdges">
    {light && <path d={d} fill="#fff" transform="translate(1 1)" />}
    <path d={d} fill={c} />
  </svg>
);

const Globe = () => (
  <svg width="16" height="16" viewBox="0 0 16 16">
    <circle cx="8" cy="8" r="6.500" fill="#b8b8b8" stroke="#707070" />
    <path d="M3 4q5-4 9 1l-3 2q-4-2-6-1z" fill="#fff" />
    <path d="M2 10q6 4 12 1l-2 3q-5 2-8-1z" fill="#1030c0" />
    <path d="M1 6q8 6 14 3M1 9q6 4 13 2" fill="none" stroke="#304878" />
    <path d="M2 14l4-2 3 2z" fill="#008000" />
  </svg>
);

const Colour = () => (
  <svg width="14" height="13" shapeRendering="crispEdges">
    <rect width="14" height="13" fill="#fff" />
    <rect width="14" height="3" fill="#000080" />
    <path d="M1 12V8l4-4h4l-2 3-2 2v3z" fill="#0c0" />
    <path d="M2 12V9l5-5" fill="none" stroke="#0ff" strokeWidth="2" />
    <path d="M5 12l1-4 4-4 3 3-3 1 3 4h-2l-2-3-2 3z" fill="#ff0" />
    <path d="M8 6h3v1h-3zM12 10h1v3h-2z" fill="#f00" />
    <path d="M.5 2v10.500h13v-10" fill="none" stroke="#00f" />
  </svg>
);

/* ---------- status bar ---------- */

const StatusBar = styled.div`
  flex: 1;
  display: flex;
  gap: 3px;
  padding: 2px 0 0 3px;
  line-height: 17px;
`;

const Ready = styled.div`
  width: 417px;
`;

const StatusCell = styled.div`
  width: ${(p) => p.$w}px;
  flex: none;
  display: flex;
  align-items: center;
  gap: 2px;
  padding-left: ${(p) => p.$pad ?? 4}px;
  padding-bottom: 1px;
  border: 1px solid;
  border-color: #808080 #fff #fff #808080;
  border-bottom: 0;
  white-space: nowrap;
  overflow: hidden;
  font-size: 11.4px;
  letter-spacing: -0.3px;
`;

export default function App() {
  return (
    <>
      <Global />
      <Window>
        <TitleBar>
          <svg width="16" height="16" viewBox="0 0 16 16">
            <circle cx="8" cy="8" r="7.500" fill="#f00" />
            <text x="7.500" y="12.500" fontFamily={ARIAL} fontWeight="bold" fontSize="11" fill="#fff">u</text>
            <circle cx="5" cy="5.500" r="1.200" fill="#fff" />
          </svg>
          <Round>
            <svg width="3" height="3"><circle cx="1.500" cy="1.500" r="1" fill="#aaa" /></svg>
          </Round>
          <TitleText>COM1 - u-center 8.11 - [Deviation Map]</TitleText>
          <TitleButtons>
            {["M2 3.500l3 3 3-3", "M2 6.500l3-3 3 3", "M2.500 2.500l5 5M7.500 2.500l-5 5"].map((d) => (
              <Round key={d}>
                <svg width="10" height="10"><path d={d} fill="none" stroke="#777" strokeWidth="1.200" /></svg>
              </Round>
            ))}
          </TitleButtons>
        </TitleBar>

        <MenuBar>
          <MenuIcon>
            <svg width="14" height="18" viewBox="0 0 14 18">
              <path d="M4 1h6l1 5q0 4-4 4t-4-4z" fill="#d8d8d8" stroke="#888" strokeWidth=".8" />
              <path d="M3.500 5h7q0 4-3.500 4t-3.500-4z" fill="#a00010" />
              <path d="M7 10v5M4 16h6" stroke="#808080" strokeWidth="1.400" />
            </svg>
          </MenuIcon>
          {[["File", 31], ["Edit", 32], ["View", 37], ["Player", 44], ["Receiver", 58], ["Tools", 39], ["Window", 53], ["Help", 40]].map(
            ([t, w]) => (
              <MenuItem key={t} $w={w}>{t}</MenuItem>
            )
          )}
          <MdiButtons>
            <MdiButton><svg width="8" height="8"><path d="M0 6h6v2h-6z" /></svg></MdiButton>
            <MdiButton>
              <svg width="9" height="9" shapeRendering="crispEdges">
                <path d="M2.500 3V.500h5v5H6M2 1h6M.5 3.500h5v4h-5zM0 4h6" fill="none" stroke="#000" />
              </svg>
            </MdiButton>
            <MdiButton><svg width="8" height="8"><path d="M1 1l6 6M7 1l-6 6" stroke="#000" strokeWidth="1.700" /></svg></MdiButton>
          </MdiButtons>
        </MenuBar>

        <BarRow>
          <Band $w={252} $first>
            <Grip />
            <Button><Pix rows={ART.doc} /></Button>
            <Button><Pix rows={ART.save} /></Button>
            <Button><Pix rows={ART.open} /></Button>
            <Arrow />
            <Sep />
            <Button><Pix rows={ART.print} /></Button>
            <Button><Pix rows={ART.preview} /></Button>
            <Sep />
            <Button><Pix rows={ART.cut} /></Button>
            <Button><Pix rows={ART.copy} /></Button>
            <Button><Pix rows={ART.paste} /></Button>
            <Sep />
            <Button><Pix rows={ART.del} /></Button>
          </Band>
          <Band $w={603}>
            <Grip $gap={5} />
            <Button><SunDoc kind={0} /></Button>
            <Button><SunDoc kind={1} /></Button>
            <Button><SunDoc kind={2} /></Button>
            <Sep />
            <Button><Pane kind={0} /></Button>
            <Button><Pane kind={1} /></Button>
            <Sep />
            <Button><Pane kind={2} /></Button>
            <Button><Pane kind={3} /></Button>
            <Arrow />
            <Sep />
            <Button><Globe /></Button>
            <Button><Colour /></Button>
            <Arrow />
            <Button><Scope><path d="M2 11l3-3 2 1 4-3 3 1" fill="none" stroke="#0c0" strokeWidth="1.500" /></Scope></Button>
            <Arrow />
            <Button><Scope><path d="M3 8h2v6h-2zM6 5h2v9h-2zM9 8h2v6h-2zM12 9h2v5h-2z" fill="#0c0" /></Scope></Button>
            <Arrow />
            <Sep />
            <Button><Scope><path d="M5 8h5v4h-5z" fill="#0a4" /><path d="M7 7h4v3h-4z" fill="#0e0" /></Scope></Button>
            <Button><Scope><SkyMini /></Scope></Button>
            <Sep />
            <Button $on><Scope blue="#00f"><SkyMini /></Scope></Button>
            <Button $on>
              <Scope blue="#00f">
                <rect x="3" y="5" width="10" height="8" fill="#0c0" />
                <path d="M4 6h1v1h-1zM8 5h2v1h-2zM11 9h2v1h-2zM6 10h2v2h-2z" fill="#f00" />
              </Scope>
            </Button>
            <Button $on>
              <Scope blue="#00f">
                <path d="M3 6h2v7h-2zM6 9h2v4h-2zM12 5h2v8h-2z" fill="#0c0" />
                <path d="M9 10h2v3h-2z" fill="#0cc" />
              </Scope>
            </Button>
            <Button>
              <Scope blue="#00f">
                <path d="M2 5h4v1h-1v2h-1v3h-1v-3h-1zM8 5h5v2h-1v2h-1v-1h-1v3h-1v-3h-1zM12 10h2v1h-2z" fill="#b0b0b0" />
                <path d="M5 6h2v2h-2zM9 7h2v2h-2z" fill="#0c0" />
              </Scope>
            </Button>
            <Button $on>
              <Scope blue="#00f">
                <path d="M3 5.500h4m1 0h5M3 7.500h4m1 0h5M3 9.500h4m1 0h5M3 11.500h4" stroke="#909090" />
                <path d="M8 11.500h5" stroke="#0cc" />
              </Scope>
            </Button>
            <Button><Scope blue="#00f"><Rays /></Scope></Button>
            <Button><Scope blue="#00f"><path d="M3 4l6 6M5 9l7-4M3 12h2M11 12h2M8 4v2" stroke="#e0e0e0" fill="none" /></Scope></Button>
            <Button>
              <Scope blue="#00f">
                <circle cx="8" cy="8.500" r="4.500" fill="none" stroke="#e0e0e0" />
                <path d="M8 5v4h3" fill="none" stroke="#e0e0e0" />
              </Scope>
            </Button>
            <Button><Scope blue="#00f"><path d="M8 4v9M3 8.500h10M4 5l3 3M12 5l-3 3M4 12l3-3M12 12l-3-3" stroke="#e0e0e0" fill="none" /></Scope></Button>
          </Band>
          <Band $w={100} $last />
        </BarRow>

        <BarRow>
          <Band $w={138} $first>
            <Grip />
            <Button><Pix rows={ART.conn} /></Button>
            <Arrow />
            <Button><Pix rows={ART.wave} /></Button>
            <Arrow />
            <Sep />
            <Button><Pix rows={ART.wand} /></Button>
            <Button><Pix rows={ART.bug} /></Button>
          </Band>
          <Band $w={453}>
            <Grip $gap={6} />
            <Button><Media d="M7 1h1v1h1v1h1v1h1v1h1v1h1v1H2V6h1V5h1V4h1V3h1V2h1zM2 9h11v3H2z" /></Button>
            <Button><Media d="M2 1h11v11H2z" /></Button>
            <Sep />
            <Button><Media d="M3 1h3v12H3zM9 1h3v12H9z" /></Button>
            <Sep />
            <Button><svg width="12" height="12"><circle cx="6" cy="6" r="5.500" fill="#f00" /></svg></Button>
            <Sep />
            <Button><Media d="M2 1h2v12H2zM6 1h1l6 6-6 6H6z" /></Button>
            <Button><Media d="M2 1h2l9 6-9 6H2z" c="#0f0" light={false} /></Button>
            <Arrow />
            <Button><Media d="M1 2h1l5 5-5 5H1V9l2-2-2-2zM7 2h1l5 5-5 5H7V9l2-2-2-2z" /></Button>
            <Button><Media d="M1 2h2v11H1zM8 2v4h5v3H8v4L3 8V7z" /></Button>
            <Slider>
              <Thumb />
              <Track />
            </Slider>
            <Button><Media d="M12 2h2v11h-2zM7 2l5 5v1l-5 5V9H1V6h6z" /></Button>
          </Band>
          <Band $w={228}>
            <Grip $gap={4} />
            <Button><Thermo c="#f00" t="H" /></Button>
            <Button><Thermo c="#ff0" t="W" /></Button>
            <Button><Thermo c="#00f" t="C" /></Button>
            <Button><Thermo c="#00f" /></Button>
            <Button><Module c="#fff" /></Button>
            <Button><Module c="#00d000" /></Button>
            <Sep />
            <Button><Gear kind={0} /></Button>
            <Button><Gear kind={1} /></Button>
            <Button><Gear kind={2} /></Button>
          </Band>
          <Band $w={136} $last>
            <Grip />
            <Button>
              <svg width="16" height="16" viewBox="0 0 16 16" shapeRendering="crispEdges">
                <rect x="1" y="0" width="14" height="14" fill="#fff" />
                <path d="M7 3h2v6h-2zM5 5h6v2h-6z" fill="#f00" />
                <path d="M0 12.500h16" stroke="#000" strokeWidth="2" />
                <path d="M3.500 10.500h3v5h-3zM9.500 10.500h3v5h-3z" fill="#fff" stroke="#000" />
              </svg>
            </Button>
            <LedGrid>
              {Array.from({ length: 24 }, (_, i) => (
                <Led key={i} />
              ))}
            </LedGrid>
          </Band>
        </BarRow>

        <Body>
          <Column>
            <MapWell>
              <Well>
                <WellInner>
                  <DeviationMap />
                </WellInner>
              </Well>
            </MapWell>
            <ViewBar>
              <Button>
                <svg width="16" height="14" viewBox="0 0 16 14" shapeRendering="crispEdges">
                  <rect x="1.500" y="3.500" width="10" height="10" fill="#fff" stroke="#000" />
                  <path d="M3 8.500h1m1 0h5M3 10.500h1m1 0h5" stroke="#000" />
                  <path d="M4 5h1v-1h1v-1h2v-1h5v4h-3v1h-1v1h-4v-1h-1z" fill="#fff" />
                  <path d="M3 5.500h2l2-3h6M4 7.500h5l2-2h2M6 5.500h3" fill="none" stroke="#000" />
                  <path d="M13 0h3v6h-3z" fill="#000080" />
                </svg>
              </Button>
              <Sep />
              <Button>
                <svg width="16" height="16" viewBox="0 0 16 16">
                  <path d="M8 1v14M1 8h14" stroke="#000" strokeWidth="1.200" />
                  <path d="M5.500 3L8 0l2.500 3zM5.500 13L8 16l2.500-3zM3 5.500L0 8l3 2.500zM13 5.500L16 8l-3 2.500z" />
                  <rect x="4.500" y="4.500" width="7" height="7" fill="none" stroke="#000" shapeRendering="crispEdges" />
                </svg>
              </Button>
              <Sep />
              <Button $on>
                <svg width="13" height="14" shapeRendering="crispEdges">
                  <path d="M12 1l-5 3-5 2v3l3 2h5" fill="none" stroke="#0f0" strokeWidth="2" />
                  <rect x="8" y="10" width="3" height="3" fill="#ff0" />
                </svg>
              </Button>
              <Button>
                <svg width="16" height="16" shapeRendering="crispEdges">
                  <path d="M4.500 0v16M11.500 0v16M0 4.500h16M0 11.500h16" stroke="#f0f" />
                  <rect x="7" y="7" width="2" height="2" fill="#ff0" />
                </svg>
              </Button>
              <Sep />
              {["I", "V", "X", "L", "C", "D", "M"].map((t) => (
                <Button key={t} $on={t === "X"}><Letter>{t}</Letter></Button>
              ))}
              <Sep />
              <Button><Letter>A</Letter></Button>
              <Button $on><Letter>C</Letter></Button>
            </ViewBar>
          </Column>
          <Column>
            <Dock h={333}><SkyView /></Dock>
            <Dock h={601}><Signals /></Dock>
          </Column>
          <Column>
            <Dock h={378} edge><DataView /></Dock>
            <Dock h={174} edge><SignalChart /></Dock>
            <Dock h={382} edge><WorldMap /></Dock>
          </Column>
        </Body>

        <StatusBar>
          <Ready>Ready</Ready>
          <StatusCell $w={104} $pad={2}>
            <Pix rows={ART.conn} />
            COM1 115200
          </StatusCell>
          <StatusCell $w={60}>u-blox M8</StatusCell>
          <StatusCell $w={8} />
          <StatusCell $w={138} $pad={3}>No file open</StatusCell>
          <StatusCell $w={55} $pad={2}>UBX</StatusCell>
          <StatusCell $w={53} $pad={2}>00:10:30</StatusCell>
          <StatusCell $w={53} $pad={2}>16:54:02</StatusCell>
          <StatusCell $w={23} $pad={5}>
            <svg width="11" height="11"><circle cx="5.500" cy="5" r="4" fill="#e8e800" stroke="#909060" /><circle cx="4.500" cy="4" r="1.200" fill="#ffffa0" /></svg>
          </StatusCell>
          <svg width="14" height="14"><path d="M2 14L14 2M8 14L14 8" stroke="#808080" /></svg>
        </StatusBar>
        <BottomShade />
        <EdgeGlow />
      </Window>
    </>
  );
}
